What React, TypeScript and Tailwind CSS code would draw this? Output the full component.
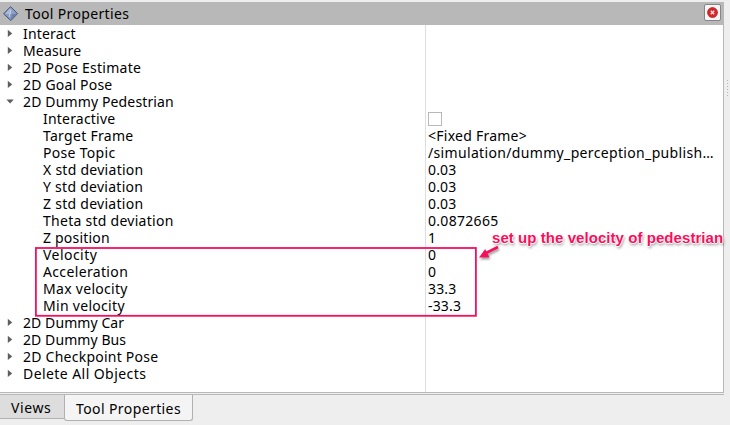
import { ReactNode } from "react";

type Row = {
  label: string;
  tracking?: string;
  value?: ReactNode;
  valueTracking?: string;
  child?: boolean;
  open?: boolean;
};

const rows: Row[] = [
  { label: "Interact", tracking: "tracking-[0.17px]" },
  { label: "Measure", tracking: "tracking-[0.15px]" },
  { label: "2D Pose Estimate", tracking: "tracking-[0.25px]" },
  { label: "2D Goal Pose", tracking: "tracking-[0.18px]" },
  { label: "2D Dummy Pedestrian", tracking: "tracking-[0.14px]", open: true },
  {
    label: "Interactive",
    tracking: "tracking-[0.2px]",
    child: true,
    value: <span className="block h-3.5 w-3.5 border border-[#b8b8b8] bg-white" />,
  },
  { label: "Target Frame", tracking: "tracking-[0.3px]", child: true, value: "<Fixed Frame>", valueTracking: "tracking-[0.25px]" },
  { label: "Pose Topic", tracking: "tracking-[0.3px]", child: true, value: "/simulation/dummy_perception_publish…", valueTracking: "tracking-[0.34px]" },
  { label: "X std deviation", tracking: "tracking-[0.27px]", child: true, value: "0.03", valueTracking: "tracking-[0.15px]" },
  { label: "Y std deviation", tracking: "tracking-[0.27px]", child: true, value: "0.03", valueTracking: "tracking-[0.15px]" },
  { label: "Z std deviation", tracking: "tracking-[0.27px]", child: true, value: "0.03", valueTracking: "tracking-[0.15px]" },
  { label: "Theta std deviation", tracking: "tracking-[0.27px]", child: true, value: "0.0872665", valueTracking: "tracking-[0.3px]" },
  { label: "Z position", tracking: "tracking-[0.2px]", child: true, value: "1" },
  { label: "Velocity", tracking: "tracking-[0.45px]", child: true, value: "0" },
  { label: "Acceleration", tracking: "tracking-[0.35px]", child: true, value: "0" },
  { label: "Max velocity", tracking: "tracking-[0.3px]", child: true, value: "33.3", valueTracking: "tracking-[0.15px]" },
  { label: "Min velocity", tracking: "tracking-[0.3px]", child: true, value: "-33.3", valueTracking: "tracking-[0.15px]" },
  { label: "2D Dummy Car", tracking: "tracking-[0.08px]" },
  { label: "2D Dummy Bus", tracking: "tracking-[0.08px]" },
  { label: "2D Checkpoint Pose", tracking: "tracking-[0.24px]" },
  { label: "Delete All Objects", tracking: "tracking-[0.43px]" },
];

function Arrow({ open }: { open?: boolean }) {
  return (
    <svg className="ml-1.5 h-[9px] w-[9px] shrink-0" viewBox="0 0 9 9" fill="#5e5e5e">
      {open ? <path d="M0.4 2.6h7.4L4.1 6.4z" /> : <path d="M1.8 0.8v7.2L6.2 4.4z" />}
    </svg>
  );
}

export default function App() {
  return (
    <div className="relative flex h-[425px] w-[730px] flex-col overflow-hidden bg-[#eeeeee] pt-0.5 font-['Noto_Sans',sans-serif] text-[14px] leading-[16px] text-black">
      <div className="flex h-[392px] w-[724px] flex-col border-r border-b border-[#b8b8b8] bg-white">
        <div className="-mr-px flex h-[23px] shrink-0 items-center bg-[#b8b8b8] pr-[3px] pl-[3px]">
          <svg className="h-4 w-4" viewBox="0 0 16 16">
            <path d="M7.5 0.7L14.6 7.6L7.8 14.6L0.6 7.8z" fill="#8294ba" stroke="#43547c" strokeWidth="1" />
            <path d="M7.5 1.6L8.6 8.2L1.7 7.9z" fill="#a9b9d6" />
            <path d="M7.5 1.6L13.6 7.6L8.6 8.2z" fill="#8fa2c6" />
            <path d="M8.6 8.2L13.6 7.6L7.9 13.6z" fill="#6b80aa" />
            <path d="M1.7 7.9L8.6 8.2L7.9 13.6z" fill="#8a9cc0" />
            <path d="M8 4L6 11" stroke="#c5d1e6" strokeWidth="0.9" />
          </svg>
          <span className="ml-1.5 tracking-[0.35px]">Tool Properties</span>
          <span className="ml-auto flex h-[17px] w-[17px] -translate-y-px items-center justify-center rounded-[2px] border border-[#858585] bg-[#f6f6f6]">
            <svg className="h-[11px] w-[11px]" viewBox="0 0 11 11">
              <circle cx="5.5" cy="5.5" r="5.2" fill="#d2262a" />
              <circle cx="5.5" cy="5.5" r="4.7" fill="none" stroke="#c23034" />
              <path d="M3.8 3.8l3.4 3.4M7.2 3.8L3.8 7.2" stroke="#f6dede" strokeWidth="1.4" />
            </svg>
          </span>
        </div>
        <div className="grid flex-1 grid-cols-[426px_1fr]">
          <div className="border-r border-[#dedede]">
            {rows.map((r) => (
              <div key={r.label} className="flex h-[17px] items-center whitespace-pre">
                {!r.child && <Arrow open={r.open} />}
                <span className={`${r.child ? "ml-[43px]" : "ml-2"} ${r.tracking ?? ""}`}>{r.label}</span>
              </div>
            ))}
          </div>
          <div className="pl-0.5">
            {rows.map((r) => (
              <div key={r.label} className="flex h-[17px] items-center whitespace-pre">
                <span className={r.valueTracking ?? ""}>{r.value}</span>
              </div>
            ))}
          </div>
        </div>
      </div>
      <div className="mt-px h-px w-[724px] shrink-0 bg-[#b8b8b8]" />
      <div className="flex h-[30px] items-start">
        <div className="flex h-6 w-16 items-center border-b border-[#b0b0b0] bg-[#dddddd] pt-0.5 pl-[11px] tracking-[0.6px]">Views</div>
        <div className="flex h-[26px] w-[129px] items-center rounded-b-[3px] border-x border-b border-[#b0b0b0] bg-[#f4f4f4] pt-0.5 pl-[11px] tracking-[0.4px]">
          Tool Properties
        </div>
      </div>

      <svg className="pointer-events-none absolute inset-0" width="730" height="425" viewBox="0 0 730 425">
        <path
          d="M727 80h1v1h-1zM727 83h1v1h-1zM727 86h1v1h-1zM727 89h1v1h-1zM727 92h1v1h-1zM727 95h1v1h-1z"
          fill="#b4b4b4"
        />
        <rect x="35.9" y="248" width="440" height="67.8" fill="none" stroke="#f80f5c" strokeWidth="1.8" />
        <g className="drop-shadow-[1px_2px_1px_rgba(0,0,0,0.4)]">
          <path d="M498 247L486 253" stroke="#f80f5c" strokeWidth="2.6" />
          <path d="M479 257.5L485.2 249L487 253L489.5 257.3z" fill="#f80f5c" />
        </g>
      </svg>
      <div className="absolute top-[230px] left-[492px] font-['Liberation_Sans',Arial,sans-serif] text-[15px] font-bold tracking-[0.06px] whitespace-nowrap text-[#f80f5c] [text-shadow:1px_0_#fff,-1px_0_#fff,0_1px_#fff,0_-1px_#fff,1px_2px_3px_rgba(0,0,0,0.5)]">
        set up the velocity of pedestrian
      </div>
    </div>
  );
}
